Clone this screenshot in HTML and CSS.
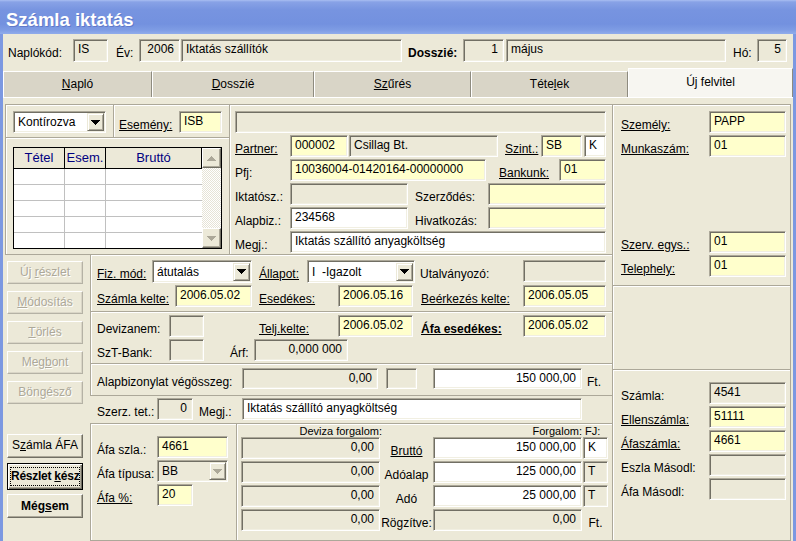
FILE: index.html
```html
<!DOCTYPE html>
<html lang="hu">
<head>
<meta charset="utf-8">
<title>Számla iktatás</title>
<link rel="stylesheet" href="styles.css">
</head>
<body>
<div class="window">
  <div class="titlebar"><span class="title">Számla iktatás</span></div>
  <div class="client">
    <div class="header">
      <span class="l w65">Naplókód:</span>
      <div class="f h23 w35">IS</div>
      <span class="l ml8 w23">Év:</span>
      <div class="f h23 r w41">2006</div>
      <div class="f h23 ml1 w221">Iktatás szállítók</div>
      <span class="l b ml6 w55">Dosszié:</span>
      <div class="f h23 r w41">1</div>
      <div class="f h23 ml2 w220">május</div>
      <span class="l ml7 w24">Hó:</span>
      <div class="f h23 r w30">5</div>
    </div>
    <div class="tabs">
      <div class="tab t1"><u>N</u>apló</div>
      <div class="tab t2"><u>D</u>osszié</div>
      <div class="tab t3"><u>Sz</u>űrés</div>
      <div class="tab t4">Téte<u>l</u>ek</div>
      <div class="tab t5 active">Új felvitel</div>
    </div>
    <div class="page">
      <div class="leftarea">
        <div class="toprow">
          <div class="box lefttop">
            <div class="lt-head">
              <div class="lt-combo">
                <div class="combo w93">Kontírozva<span class="dd"><svg width="9" height="5" viewBox="0 0 9 5"><path d="M0 0H9V1H8V2H7V3H6V4H5V5H4V4H3V3H2V2H1V1H0Z" fill="#000"/></svg></span></div>
              </div>
              <div class="lt-event">
                <span class="l u w60">Esemény:</span>
                <div class="f y w43">ISB</div>
              </div>
            </div>
            <div class="grid">
              <div class="gtable">
                <div class="ghead">
                  <div class="gh gc1">Tétel</div>
                  <div class="gh gc2">Esem.</div>
                  <div class="gh gc3">Bruttó</div>
                </div>
                <div class="grow"><div class="gd gc1"></div><div class="gd gc2"></div><div class="gd gc3"></div></div>
                <div class="grow"><div class="gd gc1"></div><div class="gd gc2"></div><div class="gd gc3"></div></div>
                <div class="grow"><div class="gd gc1"></div><div class="gd gc2"></div><div class="gd gc3"></div></div>
                <div class="grow"><div class="gd gc1"></div><div class="gd gc2"></div><div class="gd gc3"></div></div>
                <div class="grow last"><div class="gd gc1"></div><div class="gd gc2"></div><div class="gd gc3"></div></div>
              </div>
              <div class="vs">
                <div class="sb"><svg width="9" height="5" viewBox="0 0 9 5"><path d="M4 0H5V1H6V2H7V3H8V4H9V5H0V4H1V3H2V2H3V1H4Z" fill="#ACA899"/></svg></div>
                <div class="track"></div>
                <div class="sb"><svg width="9" height="5" viewBox="0 0 9 5"><path d="M0 0H9V1H8V2H7V3H6V4H5V5H4V4H3V3H2V2H1V1H0Z" fill="#ACA899"/></svg></div>
              </div>
            </div>
          </div>
          <div class="box midtop">
            <div class="f w371"></div>
            <div class="row">
              <span class="l u w55">Partner:</span>
              <div class="f y w58">000002</div>
              <div class="f ml1 w149">Csillag Bt.</div>
              <span class="l u ml7 w36">Szint.:</span>
              <div class="f y w41">SB</div>
              <div class="f wh ml2 w22">K</div>
            </div>
            <div class="row">
              <span class="l w55">Pfj:</span>
              <div class="f y w196">10036004-01420164-00000000</div>
              <span class="l u ml13 w60">Bankunk:</span>
              <div class="f y w47">01</div>
            </div>
            <div class="row">
              <span class="l w55">Iktatósz.:</span>
              <div class="f w118"></div>
              <span class="l ml7 w73">Szerződés:</span>
              <div class="f y w118"></div>
            </div>
            <div class="row">
              <span class="l w55">Alapbiz.:</span>
              <div class="f wh w118">234568</div>
              <span class="l ml7 w73">Hivatkozás:</span>
              <div class="f y w118"></div>
            </div>
            <div class="row">
              <span class="l w55">Megj.:</span>
              <div class="f wh w316">Iktatás szállító anyagköltség</div>
            </div>
          </div>
        </div>
        <div class="bottomrow">
          <div class="buttons">
            <div class="btn dis">Új <u>r</u>észlet</div>
            <div class="btn dis"><u>M</u>ódosítás</div>
            <div class="btn dis"><u>T</u>örlés</div>
            <div class="btn dis">Meg<u>b</u>ont</div>
            <div class="btn dis">Bön<u>g</u>észő</div>
            <div class="btn afa">S<u>z</u>ámla ÁFA</div>
            <div class="btn def b"><span class="focus">Részlet <u>k</u>ész</span></div>
            <div class="btn cancel b">Még<u>s</u>em</div>
          </div>
          <div class="lowermid">
            <div class="box secA">
              <div class="row">
                <span class="l u w55">Fiz. mód:</span>
                <div class="combo w100">átutalás<span class="dd"><svg width="9" height="5" viewBox="0 0 9 5"><path d="M0 0H9V1H8V2H7V3H6V4H5V5H4V4H3V3H2V2H1V1H0Z" fill="#000"/></svg></span></div>
                <span class="l u ml7 w48">Állapot:</span>
                <div class="combo w108">I  -Igazolt<span class="dd"><svg width="9" height="5" viewBox="0 0 9 5"><path d="M0 0H9V1H8V2H7V3H6V4H5V5H4V4H3V3H2V2H1V1H0Z" fill="#000"/></svg></span></div>
                <span class="l ml5 w103">Utalványozó:</span>
                <div class="f w83"></div>
              </div>
              <div class="row">
                <span class="l u w78">Számla kelte:</span>
                <div class="f y w77">2006.05.02</div>
                <span class="l u ml7 w79">Esedékes:</span>
                <div class="f y w75">2006.05.16</div>
                <span class="l u ml8 w102">Beérkezés kelte:</span>
                <div class="f y w83">2006.05.05</div>
              </div>
            </div>
            <div class="box secB">
              <div class="row">
                <span class="l w72">Devizanem:</span>
                <div class="f w35"></div>
                <span class="l u ml55 w79">Telj.kelte:</span>
                <div class="f y w75">2006.05.02</div>
                <span class="l u b ml8 w102">Áfa esedékes:</span>
                <div class="f y w83">2006.05.02</div>
              </div>
              <div class="row">
                <span class="l w72">SzT-Bank:</span>
                <div class="f w35"></div>
                <span class="l ml26 w24">Árf:</span>
                <div class="f r w94">0,000 000</div>
              </div>
            </div>
            <div class="box secC">
              <div class="row">
                <span class="l w145">Alapbizonylat végösszeg:</span>
                <div class="f r w136">0,00</div>
                <div class="f ml8 w31"></div>
                <div class="f wh r ml16 w149">150 000,00</div>
                <span class="l ml5">Ft.</span>
              </div>
            </div>
            <div class="szerz">
              <div class="row">
                <span class="l w60">Szerz. tet.:</span>
                <div class="f r w36">0</div>
                <span class="l ml6 w43">Megj.:</span>
                <div class="f wh w340">Iktatás szállító anyagköltség</div>
              </div>
            </div>
            <div class="secD">
              <div class="box dleft">
                <div class="row">
                  <span class="l w60">Áfa szla.:</span>
                  <div class="f y w71">4661</div>
                </div>
                <div class="row">
                  <span class="l w60">Áfa típusa:</span>
                  <div class="combo disabled w71">BB<span class="dd"><svg width="9" height="5" viewBox="0 0 9 5"><path d="M0 0H9V1H8V2H7V3H6V4H5V5H4V4H3V3H2V2H1V1H0Z" fill="#ACA899"/></svg></span></div>
                </div>
                <div class="row">
                  <span class="l u w60">Áfa %:</span>
                  <div class="f y w36">20</div>
                </div>
              </div>
              <div class="box dright">
                <div class="dhead">
                  <span class="dh1">Deviza forgalom:</span>
                  <span class="dh2">Forgalom:</span>
                  <span class="dh3">FJ:</span>
                </div>
                <div class="row">
                  <div class="f r w139">0,00</div>
                  <span class="l c u w53">Bruttó</span>
                  <div class="f wh r w149">150 000,00</div>
                  <div class="f wh ml1 w25">K</div>
                </div>
                <div class="row">
                  <div class="f r w139">0,00</div>
                  <span class="l c w53">Adóalap</span>
                  <div class="f wh r w149">125 000,00</div>
                  <div class="f ml1 w25">T</div>
                </div>
                <div class="row">
                  <div class="f r w139">0,00</div>
                  <span class="l c w53">Adó</span>
                  <div class="f wh r w149">25 000,00</div>
                  <div class="f ml1 w25">T</div>
                </div>
                <div class="row">
                  <div class="f r w139">0,00</div>
                  <span class="l c w53">Rögzítve:</span>
                  <div class="f r w149">0,00</div>
                  <span class="l c ml1 w25">Ft.</span>
                </div>
              </div>
            </div>
          </div>
        </div>
      </div>
      <div class="rightcol">
        <div class="box rtop">
          <div class="row"><span class="l u w88">Személy:</span><div class="f y w77">PAPP</div></div>
          <div class="row"><span class="l u w88">Munkaszám:</span><div class="f y w77">01</div></div>
          <div class="row gapbig"><span class="l u w88">Szerv. egys.:</span><div class="f y w77">01</div></div>
          <div class="row"><span class="l u w88">Telephely:</span><div class="f y w77">01</div></div>
        </div>
        <div class="box rmid"></div>
        <div class="box rbot">
          <div class="row"><span class="l w88">Számla:</span><div class="f w77">4541</div></div>
          <div class="row"><span class="l u w88">Ellenszámla:</span><div class="f y w77">51111</div></div>
          <div class="row"><span class="l u w88">Áfaszámla:</span><div class="f y w77">4661</div></div>
          <div class="row"><span class="l w88">Eszla Másodl:</span><div class="f w77"></div></div>
          <div class="row"><span class="l w88">Áfa Másodl:</span><div class="f w77"></div></div>
        </div>
      </div>
    </div>
  </div>
</div>
</body>
</html>
```
FILE: styles.css
```css
* { box-sizing: border-box; margin: 0; padding: 0; }
html, body { width: 796px; height: 541px; overflow: hidden; }
body {
  font-family: "Liberation Sans", Arial, sans-serif;
  font-size: 12px;
  color: #000;
  background: #ECE9D8;
}
.window { width: 796px; height: 541px; display: flex; flex-direction: column; }

.titlebar {
  flex: none;
  height: 34px;
  padding: 9px 0 0 6px;
  background: linear-gradient(180deg, #A9BEF1 0, #88A2E6 2px, #7794E0 10px, #7391DF 24px, #7E9CE4 30px, #90ACEB 34px);
}
.title {
  display: block;
  color: #fff;
  font-weight: bold;
  font-size: 18.5px;
  line-height: 22px;
  text-shadow: 1px 1px 0 #6079C9;
}

.client {
  flex: 1;
  display: flex;
  flex-direction: column;
  background: #ECE9D8;
  border-left: 3px solid #7C98E1;
  border-right: 3px solid #7C98E1;
}

/* header */
.header { flex: none; height: 34px; display: flex; padding: 5px 0 0 5px; }

/* tabs */
.tabs { flex: none; display: flex; align-items: flex-end; height: 29px; }
.tab {
  height: 26px;
  line-height: 24px;
  text-align: center;
  background: #D9D5C7;
  border-top: 1px solid #fff;
  border-left: 1px solid #fff;
  border-right: 1px solid #8E8B7F;
}
.tab u { text-decoration: underline; }
.t1 { width: 149px; }
.t2 { width: 162px; }
.t3 { width: 157px; }
.t4 { width: 157px; }
.t5 { width: 165px; }
.tab.active { height: 29px; line-height: 26px; background: #F7F6F1; }

/* page */
.page { flex: 1; display: flex; padding: 6px 2px 0 2px; border-top: 1px solid #fff; }
.leftarea { width: 608px; display: flex; flex-direction: column; }
.rightcol { width: 179px; margin-left: -1px; display: flex; flex-direction: column; }

.box { border: 1px solid #ACA899; box-shadow: inset 1px 1px 0 #fff; }

.toprow { display: flex; height: 151px; flex: none; }
.lefttop { width: 225px; }
.midtop { width: 384px; margin-left: -1px; padding: 6px 0 0 5px; display: flex; flex-direction: column; gap: 2px; }

.lt-head { display: flex; height: 33px; border-bottom: 1px solid #ACA899; box-shadow: 0 1px 0 #fff; }
.lt-combo { width: 108px; padding: 6px 0 0 7px; border-right: 1px solid #ACA899; box-shadow: 1px 0 0 #fff; }
.lt-event { display: flex; padding: 6px 0 0 5px; }

/* grid */
.grid { margin: 9px 0 0 7px; width: 209px; height: 102px; border: 1px solid #000; display: flex; background: #fff; }
.gtable { width: 188px; }
.ghead { display: flex; height: 21px; border-bottom: 1px solid #000; background: #ECE9D8; }
.gh { color: #000080; font-size: 13px; line-height: 20px; text-align: center; border-right: 1px solid #000; }
.gc1 { width: 51px; }
.gc2 { width: 41px; }
.gc3 { width: 96px; }
.grow { display: flex; height: 16px; border-bottom: 1px solid #C0C0C0; }
.grow.last { border-bottom: none; height: 15px; }
.gd { border-right: 1px solid #C0C0C0; }
.gd.gc3 { border-right: none; }
.vs { width: 19px; display: flex; flex-direction: column; }
.sb {
  height: 20px;
  flex: none;
  background: #ECE9D8;
  border: 1px solid;
  border-color: #fff #716F64 #716F64 #fff;
  box-shadow: inset -1px -1px 0 #ACA899;
  display: flex; align-items: center; justify-content: center;
}
.track {
  flex: 1;
  background: conic-gradient(#fff 25%, #E6E3D6 0 50%, #fff 0 75%, #E6E3D6 0) 0 0 / 2px 2px;
}

/* fields */
.row { display: flex; height: 22px; flex: none; }
.f {
  flex: none;
  height: 22px;
  border: 1px solid;
  border-color: #ACA899 #fff #fff #ACA899;
  box-shadow: inset 1px 1px 0 #716F64, inset -1px -1px 0 #F1EFE2;
  background: #ECE9D8;
  padding: 1px 0 0 4px;
  line-height: 17px;
  white-space: nowrap;
  overflow: hidden;
}
.h23 { height: 23px; }
.y { background: #FFFFCC; }
.wh { background: #fff; }
.r { text-align: right; padding: 1px 5px 0 0; }

.combo {
  flex: none;
  display: flex;
  align-items: center;
  height: 22px;
  background: #fff;
  border: 1px solid;
  border-color: #ACA899 #fff #fff #ACA899;
  box-shadow: inset 1px 1px 0 #716F64, inset -1px -1px 0 #F1EFE2;
  padding-left: 4px;
  white-space: pre;
}
.combo.disabled { background: #ECE9D8; }
.dd {
  margin-left: auto;
  margin-right: 1px;
  width: 17px;
  height: 18px;
  background: #ECE9D8;
  border: 1px solid;
  border-color: #ECE9D8 #716F64 #716F64 #ECE9D8;
  box-shadow: inset 1px 1px 0 #fff, inset -1px -1px 0 #ACA899;
  display: flex; align-items: center; justify-content: center;
}

/* labels */
.l { flex: none; display: block; white-space: nowrap; height: 22px; line-height: 22px; padding-top: 3px; }
.u { text-decoration: underline; }
.b { font-weight: bold; }
.c { text-align: center; }

/* buttons */
.bottomrow { display: flex; flex: 1; margin-top: -1px; }
.buttons { width: 85px; flex: none; padding: 7px 0 0 2px; }
.btn {
  width: 76px;
  height: 23px;
  line-height: 21px;
  text-align: center;
  background: #ECE9D8;
  border: 1px solid;
  border-color: #fff #716F64 #716F64 #fff;
  box-shadow: inset -1px -1px 0 #ACA899;
  margin-bottom: 7px;
  white-space: nowrap;
}
.btn.dis {
  color: #ACA899;
  text-shadow: 1px 1px 0 #fff;
  border-color: #fff #B5B2A5 #B5B2A5 #fff;
  box-shadow: inset -1px -1px 0 #DAD6C7;
}
.btn.afa { margin-top: 30px; height: 24px; margin-bottom: 5px; }
.btn.def {
  height: 27px;
  border: 1px solid #000;
  box-shadow: inset 1px 1px 0 #fff, inset -1px -1px 0 #716F64, inset -2px -2px 0 #ACA899;
  padding: 3px 2px;
  line-height: 17px;
  margin-bottom: 4px;
}
.focus { display: block; height: 19px; border: 1px dotted #000; line-height: 17px; letter-spacing: -0.25px; overflow: visible; }
.btn.cancel { height: 24px; line-height: 22px; }

/* lower middle */
.lowermid { width: 523px; flex: none; display: flex; flex-direction: column; }
.secA { height: 58px; padding: 5px 0 0 6px; display: flex; flex-direction: column; gap: 2px; }
.secA .row:first-child { height: 23px; }
.secA .row:first-child .combo { height: 23px; }
.secB { height: 53px; margin-top: -1px; padding: 3px 0 0 6px; display: flex; flex-direction: column; gap: 2px; }
.secC { height: 33px; margin-top: -1px; padding: 4px 0 0 6px; }
.secC .f { height: 21px; }
.szerz { height: 27px; padding: 2px 0 0 7px; }
.secD { display: flex; flex: 1; }
.dleft { width: 147px; padding: 12px 0 0 6px; display: flex; flex-direction: column; gap: 2px; }
.dright { width: 377px; margin-left: -1px; padding: 0 0 0 4px; display: flex; flex-direction: column; gap: 2px; }
.dhead { display: flex; height: 12px; margin-top: 1px; margin-bottom: -2px; font-size: 11px; line-height: 12px; }
.dh1 { width: 141px; text-align: right; }
.dh2 { width: 200px; text-align: right; }
.dh3 { width: 25px; padding-left: 3px; }

/* right column */
.rtop { height: 182px; padding: 6px 0 0 8px; display: flex; flex-direction: column; gap: 2px; }
.gapbig { margin-top: 72px; }
.rmid { height: 85px; margin-top: -1px; }
.rbot { flex: 1; margin-top: -1px; padding: 12px 0 0 8px; display: flex; flex-direction: column; gap: 2px; }

/* widths */
.w22 { width: 22px; } .w23 { width: 23px; } .w24 { width: 24px; } .w25 { width: 25px; }
.w30 { width: 30px; } .w31 { width: 31px; } .w35 { width: 35px; } .w36 { width: 36px; }
.w41 { width: 41px; } .w43 { width: 43px; } .w47 { width: 47px; } .w48 { width: 48px; }
.w53 { width: 53px; } .w55 { width: 55px; } .w58 { width: 58px; } .w60 { width: 60px; }
.w65 { width: 65px; } .w71 { width: 71px; } .w72 { width: 72px; } .w73 { width: 73px; }
.w75 { width: 75px; } .w77 { width: 77px; } .w78 { width: 78px; } .w79 { width: 79px; }
.w83 { width: 83px; } .w88 { width: 88px; } .w93 { width: 93px; } .w94 { width: 94px; }
.w100 { width: 100px; } .w102 { width: 102px; } .w103 { width: 103px; } .w108 { width: 108px; }
.w118 { width: 118px; } .w136 { width: 136px; } .w139 { width: 139px; } .w145 { width: 145px; }
.w149 { width: 149px; } .w196 { width: 196px; } .w220 { width: 220px; } .w221 { width: 221px; }
.w316 { width: 316px; } .w340 { width: 340px; } .w371 { width: 371px; }

/* margins */
.ml1 { margin-left: 1px; } .ml2 { margin-left: 2px; } .ml5 { margin-left: 5px; }
.ml6 { margin-left: 6px; } .ml7 { margin-left: 7px; } .ml8 { margin-left: 8px; }
.ml13 { margin-left: 13px; } .ml16 { margin-left: 16px; } .ml26 { margin-left: 26px; }
.ml55 { margin-left: 55px; }
```
